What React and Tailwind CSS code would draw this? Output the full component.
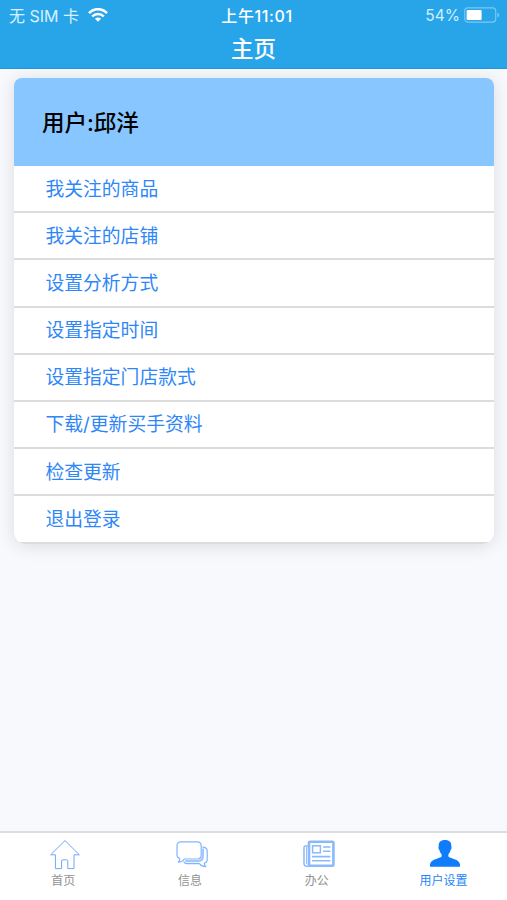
import React, { useState } from 'react';

const menuItems = [
  '我关注的商品',
  '我关注的店铺',
  '设置分析方式',
  '设置指定时间',
  '设置指定门店款式',
  '下载/更新买手资料',
  '检查更新',
  '退出登录',
];

function WifiIcon() {
  return (
    <svg width="20" height="14" viewBox="0 0 20 14" fill="none" stroke="#fff" strokeWidth="2.5">
      <path d="M1 5.2C6 -0.2 14 -0.2 19 5.2" />
      <path d="M4.2 8.5C7.4 5.1 12.6 5.1 15.8 8.5" />
      <path d="M10 13.8L6.9 10.7C8.6 9 11.4 9 13.1 10.7Z" fill="#fff" stroke="none" />
    </svg>
  );
}

function BatteryIcon() {
  return (
    <svg width="36" height="16" viewBox="0 0 36 16" fill="none">
      <rect x="0.7" y="0.9" width="31" height="14.2" rx="3" stroke="#7cc8f4" strokeWidth="1.1" />
      <rect x="2.6" y="2.9" width="15" height="10.2" rx="1" fill="#fff" />
      <path d="M33.4 5.6C35.6 6.4 35.6 9.6 33.4 10.4Z" fill="#7cc8f4" />
    </svg>
  );
}

function HomeIcon() {
  return (
    <svg className="ml-[3px]" width="32" height="32" viewBox="0 0 32 32" fill="none" stroke="#6ea8fb" strokeWidth="1" strokeLinejoin="round">
      <path d="M16 1.6L1.6 15.8H6.4V29.6H12.6V22Q12.6 20.8 13.8 20.8H17.6Q18.8 20.8 18.8 22V29.6H25V15.8H30.4Z" />
    </svg>
  );
}

function ChatIcon() {
  return (
    <svg className="ml-[3px]" width="32" height="32" viewBox="0 0 32 32" fill="none" stroke="#82b5fd" strokeWidth="1.2" strokeLinejoin="round">
      <path d="M5 2.8H21Q25.2 2.8 25.2 6.8V16Q25.2 20 21 20H8.4Q6.2 23.2 2.4 23.2Q4 21.8 3.6 19.4Q1 18.4 1 16V6.8Q1 2.8 5 2.8Z" />
      <path d="M26.4 8.2Q31.2 8.4 31.2 12V20.6Q31.2 23.4 28.4 24.2Q28.2 26 29.8 27.6Q25.8 27.6 23.4 24.6H11Q8.6 24.6 7.6 22.4" />
      <path d="M26.8 9.6V17.6Q26.8 22 22 22.1H9.2" strokeWidth="2.4" stroke="#a3c9fe" />
    </svg>
  );
}

function NewsIcon() {
  return (
    <svg className="ml-[4px]" width="32" height="32" viewBox="0 0 32 32" fill="none" stroke="#8ab9fd" strokeWidth="1.5">
      <rect x="6" y="2.8" width="24.4" height="24" rx="1" strokeWidth="2.6" />
      <path d="M6 7H2.2Q1 7 1 8.4V24.2Q1 27.2 3.8 27.2H7" />
      <path d="M3.6 8V25" strokeWidth="1" />
      <rect x="9.6" y="6.8" width="7.8" height="7" />
      <path d="M20 8H27.4M20 12.2H27.4M9 17.6H27.4M9 21.8H27.4" strokeWidth="1.6" />
    </svg>
  );
}

function UserIcon() {
  return (
    <svg className="ml-[2px]" width="32" height="32" viewBox="0 0 32 32" fill="#0f7dfb">
      <path d="M16 1C20.5 1 22.6 3.4 22.3 7.4C22.9 8.6 22.5 10 21.7 10.8C21.2 13 20.3 14.3 19.4 15.2V17.4C20.6 19.2 30.8 20 31 25.4V27.8H1V25.4C1.2 20 11.4 19.2 12.6 17.4V15.2C11.7 14.3 10.8 13 10.3 10.8C9.5 10 9.1 8.6 9.7 7.4C9.4 3.4 11.5 1 16 1Z" />
    </svg>
  );
}

const tabs = [
  { id: 'home', label: '首页', Icon: HomeIcon },
  { id: 'message', label: '信息', Icon: ChatIcon },
  { id: 'office', label: '办公', Icon: NewsIcon },
  { id: 'user', label: '用户设置', Icon: UserIcon },
];

export default function App() {
  const [activeTab, setActiveTab] = useState('user');

  return (
    <div className="flex flex-col h-[900px] bg-[#f7f9fd] font-['Inter','Noto_Sans_CJK_SC',sans-serif] overflow-hidden">
      <header className="h-[69px] shrink-0 bg-[#28a5e9] border-b border-[#2198da] text-white">
        <div className="grid grid-cols-3 items-center h-[30px] pl-[9px] pr-[7px] text-[15.5px] leading-none">
          <div className="flex items-center gap-[9px] text-[#d9f1ff]">
            <span className="whitespace-nowrap text-[16px] pt-px">无 SIM 卡</span>
            <WifiIcon />
          </div>
          <div className="text-center font-medium text-[16px] tracking-[0.6px] pl-[5px] pt-px">上午11:01</div>
          <div className="flex items-center justify-end gap-1 text-[#d3eeff]">
            <span className="pt-px">54%</span>
            <BatteryIcon />
          </div>
        </div>
        <h1 className="text-center text-[22.5px] leading-[38px] font-medium">主页</h1>
      </header>

      <main className="flex-1 pt-[9px] pl-[14px] pr-[13px]">
        <div className="rounded-b-xl rounded-t-lg overflow-hidden bg-white shadow-[0_2px_18px_rgba(0,0,0,0.12)]">
          <div className="h-[88px] flex items-center pl-7 bg-[#87c6ff]">
            <h2 className="text-[22.5px] font-medium text-black pt-px">用户:邱洋</h2>
          </div>
          <ul>
            {menuItems.map((item) => (
              <li key={item} className="h-[47.2px] flex items-center pt-[2px] pl-[31.5px] border-b-2 border-[#dcdcdd] text-[18.8px] text-[#2f87f7]">
                {item}
              </li>
            ))}
          </ul>
        </div>
      </main>

      <nav className="grid grid-cols-4 h-[69px] shrink-0 bg-white border-t-2 border-[#dcdde0]">
        {tabs.map(({ id, label, Icon }) => (
          <button
            key={id}
            onClick={() => setActiveTab(id)}
            className={`flex flex-col items-center pt-[6px] text-[12px] leading-[20px] ${activeTab === id ? 'text-[#2585fa]' : 'text-[#929292]'}`}
          >
            <Icon />
            <span>{label}</span>
          </button>
        ))}
      </nav>
    </div>
  );
}
